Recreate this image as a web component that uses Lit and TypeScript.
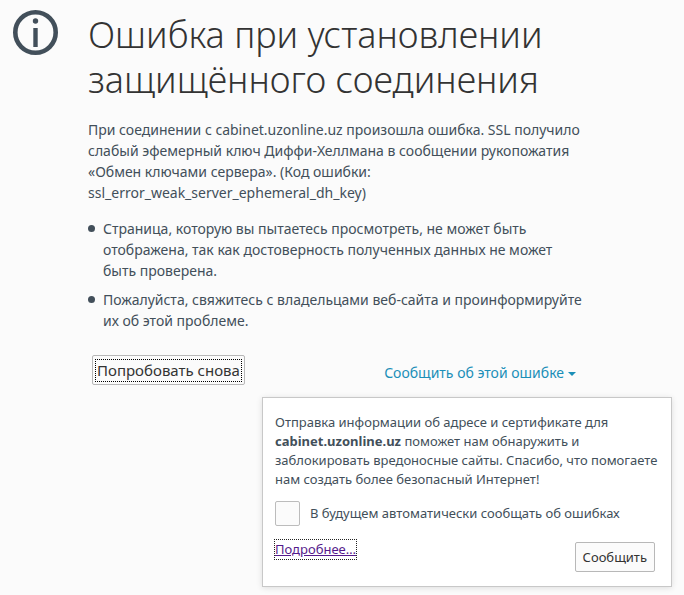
import { LitElement, html, css, svg } from "lit";
import { customElement, state } from "lit/decorators.js";

const infoIcon = svg`
  <circle cx="23.500" cy="22.500" r="20.200" fill="none" stroke="#424f5a" stroke-width="4.600"></circle>
  <circle cx="23.500" cy="11" r="2.700" fill="#424f5a"></circle>
  <rect x="21.300" y="18" width="4.400" height="19" fill="#424f5a"></rect>`;

@customElement("report-panel")
export class ReportPanel extends LitElement {
  static styles = css`
    :host {
      display: block;
      box-sizing: border-box;
      padding: 15px 11px 14px 12px;
      background: #fff;
      border: 1px solid #c8c8c8;
      box-shadow: 0 1px 6px rgba(0, 0, 0, 0.12);
      font-size: 13px;
      line-height: 19px;
    }
    p {
      margin: 0;
    }
    .auto {
      display: flex;
      align-items: center;
      gap: 10px;
      margin-top: 12px;
    }
    input {
      appearance: none;
      box-sizing: border-box;
      flex: none;
      width: 25px;
      height: 25px;
      margin: 0;
      border: 1px solid #bcbcbc;
      border-radius: 2px;
      background: #fbfbfb;
    }
    input:checked {
      background: #0095dd;
    }
    .actions {
      display: flex;
      justify-content: space-between;
      align-items: flex-start;
      margin-top: 14px;
      padding-right: 5px;
    }
    a {
      color: #551a8b;
      outline: 1px dotted #222;
    }
    button {
      height: 30px;
      margin-top: 2px;
      padding: 0 7px;
      border: 1px solid #b8b8b8;
      border-radius: 2px;
      background: #fbfbfb;
      color: #333;
      font: inherit;
    }
  `;

  render() {
    return html`
      <p>
        Отправка информации об адресе и сертификате для
        <strong>cabinet.uzonline.uz</strong> поможет нам обнаружить и
        заблокировать вредоносные сайты. Спасибо, что помогаете нам создать
        более безопасный Интернет!
      </p>
      <label class="auto">
        <input type="checkbox" />
        <span>В будущем автоматически сообщать об ошибках</span>
      </label>
      <div class="actions">
        <a href="#more">Подробнее…</a>
        <button type="button">Сообщить</button>
      </div>
    `;
  }
}

@customElement("app-root")
export class AppRoot extends LitElement {
  @state() private open = true;

  static styles = css`
    :host {
      display: block;
      box-sizing: border-box;
      min-height: 100vh;
      padding: 10px 12px 8px;
      background: #fbfbfb;
      color: #424f5a;
      font: 14px/21px "Noto Sans", "Open Sans", sans-serif;
    }
    .page {
      display: grid;
      grid-template-columns: 46px minmax(0, 1fr);
      column-gap: 30px;
    }
    .icon {
      width: 46px;
      height: 46px;
    }
    .content {
      max-width: 500px;
    }
    h1 {
      margin: 2px 0 0;
      color: #333;
      font-size: 36px;
      line-height: 45px;
      font-weight: 300;
    }
    p {
      margin: 17px 0 15px;
    }
    ul {
      margin: 0;
      padding-left: 15px;
      list-style: none;
    }
    li {
      position: relative;
      margin-bottom: 8px;
    }
    li::before {
      content: "";
      position: absolute;
      left: -15px;
      top: 7px;
      width: 7px;
      height: 7px;
      border-radius: 50%;
      background: #424f5a;
    }
    .actions {
      display: flex;
      justify-content: space-between;
      align-items: center;
      margin-top: 24px;
      padding: 0 12px 0 4px;
    }
    .retry {
      height: 30px;
      padding: 3px;
      border: 1px solid #b8b8b8;
      border-radius: 2px;
      background: #fbfbfb;
      color: #333;
      font: inherit;
      font-size: 15px;
    }
    .retry span {
      display: block;
      padding: 0 1px;
      outline: 1px dotted #000;
    }
    .toggle {
      display: flex;
      align-items: center;
      gap: 4px;
      padding: 4px 0 0;
      border: 0;
      background: none;
      color: #1b8fb8;
      font: inherit;
    }
    .caret {
      border: 4px solid transparent;
      border-top-color: currentColor;
      border-bottom: 0;
      margin-top: 3px;
    }
    report-panel {
      width: 410px;
      max-width: 100%;
      margin: 12px 0 0 auto;
    }
  `;

  render() {
    return html`
      <main class="page">
        <svg class="icon" viewBox="0 0 46 46" aria-hidden="true">${infoIcon}</svg>
        <div class="content">
          <h1>Ошибка при установлении защищённого соединения</h1>
          <p>
            При соединении с cabinet.uzonline.uz произошла ошибка. SSL получило
            слабый эфемерный ключ Диффи-Хеллмана в сообщении рукопожатия «Обмен
            ключами сервера». (Код ошибки: ssl_error_weak_server_ephemeral_dh_key)
          </p>
          <ul>
            <li>
              Страница, которую вы пытаетесь просмотреть, не может быть
              отображена, так как достоверность полученных данных не может быть
              проверена.
            </li>
            <li>
              Пожалуйста, свяжитесь с владельцами веб-сайта и проинформируйте их
              об этой проблеме.
            </li>
          </ul>
          <div class="actions">
            <button class="retry" type="button"><span>Попробовать снова</span></button>
            <button
              class="toggle"
              type="button"
              aria-expanded=${this.open}
              @click=${() => (this.open = !this.open)}
            >
              Сообщить об этой ошибке <span class="caret"></span>
            </button>
          </div>
        </div>
      </main>
      ${this.open ? html`<report-panel></report-panel>` : null}
    `;
  }
}
